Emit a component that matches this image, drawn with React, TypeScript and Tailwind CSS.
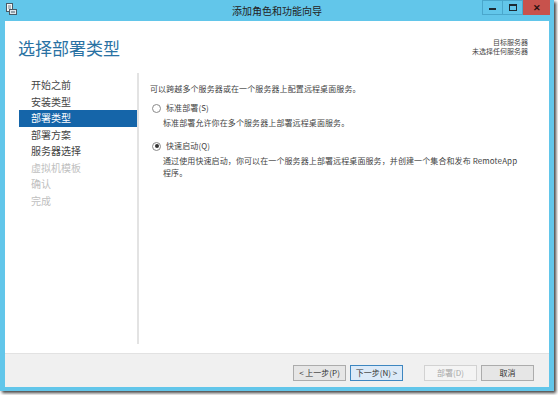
import React from "react";

const navItems: { label: string; state: "normal" | "active" | "disabled" }[] = [
  { label: "开始之前", state: "normal" },
  { label: "安装类型", state: "normal" },
  { label: "部署类型", state: "active" },
  { label: "部署方案", state: "normal" },
  { label: "服务器选择", state: "normal" },
  { label: "虚拟机模板", state: "disabled" },
  { label: "确认", state: "disabled" },
  { label: "完成", state: "disabled" },
];

function Radio({ checked }: { checked?: boolean }) {
  return (
    <span className="flex h-[9px] w-[9px] items-center justify-center rounded-full border border-[#8a8a8a] bg-white">
      {checked && <span className="h-[4px] w-[4px] rounded-full bg-[#333]" />}
    </span>
  );
}

function TitleIcon() {
  return (
    <svg width="11" height="12" viewBox="0 0 11 12">
      <rect x="0.5" y="0.5" width="6" height="8" fill="#f4f4f4" stroke="#4a5a66" />
      <line x1="2" y1="3" x2="5" y2="3" stroke="#7a8a96" />
      <line x1="2" y1="5" x2="5" y2="5" stroke="#7a8a96" />
      <rect x="3.5" y="6.5" width="7" height="5" fill="#dfe8ee" stroke="#4a5a66" />
      <line x1="5" y1="9" x2="9" y2="9" stroke="#4a5a66" />
    </svg>
  );
}

export default function App() {
  return (
    <div className="h-[395px] w-[558px] bg-white font-['Noto_Sans_CJK_SC','Microsoft_YaHei',sans-serif] text-[#3a3a3a]">
      <div className="flex h-[391px] w-[554px] flex-col bg-[#62c6ea] shadow-[2px_2px_3px_rgba(0,0,0,0.75)]">
        {/* title bar */}
        <div className="relative flex h-[21px] items-start">
          <div className="pl-[6px] pt-[3px]">
            <TitleIcon />
          </div>
          <div className="absolute left-0 right-0 top-[3px] text-center text-[10px] leading-[15px] text-[#222]">
            添加角色和功能向导
          </div>
          <div className="relative ml-auto mr-[4px] flex h-[15px]">
            <div className="flex h-[15px] w-[21px] items-center justify-center border border-[#4aa7cc]">
              <span className="mt-[3px] h-[2px] w-[7px] bg-[#1d2a33]" />
            </div>
            <div className="flex h-[15px] w-[20px] items-center justify-center border-y border-r border-[#4aa7cc]">
              <span className="h-[7px] w-[8px] border border-t-2 border-[#1d2a33]" />
            </div>
            <div className="flex h-[15px] w-[27px] items-center justify-center bg-[#c8524c] text-[9px] font-bold leading-none text-[#2a1010]">
              ✕
            </div>
          </div>
        </div>

        {/* body */}
        <div className="mx-[5px] mb-[4px] flex flex-1 flex-col bg-white">
          {/* header */}
          <div className="flex h-[52px] items-start justify-between">
            <div className="pl-[13px] pt-[15px] text-[17px] leading-[24px] text-[#2a72a3]">选择部署类型</div>
            <div className="pr-[21px] pt-[17px] text-right text-[7px] leading-[9px] text-[#444]">
              <div>目标服务器</div>
              <div>未选择任何服务器</div>
            </div>
          </div>

          {/* main */}
          <div className="flex flex-1">
            <div className="mb-[9px] w-[134px] border-r-2 border-[#e3e3e3]">
              <div className="ml-[14px] mt-[4px] flex flex-col">
                {navItems.map((it) => (
                  <div
                    key={it.label}
                    className={
                      it.state === "active"
                        ? "h-[16.5px] bg-[#1565a9] pl-[12px] text-[10px] leading-[16.5px] text-white"
                        : it.state === "disabled"
                        ? "h-[16.5px] pl-[12px] text-[10px] leading-[16.5px] text-[#c0c0c0]"
                        : "h-[16.5px] pl-[12px] text-[10px] leading-[16.5px] text-[#444]"
                    }
                  >
                    {it.label}
                  </div>
                ))}
              </div>
            </div>
            <div className="flex-1 pl-[11px] pt-[10px] text-[8px] leading-[12px] tracking-[0.1px] text-[#444]">
              <div>可以跨越多个服务器或在一个服务器上配置远程桌面服务。</div>
              <div className="ml-[2px] mt-[6px] flex h-[14px] items-center gap-[5px]">
                <Radio />
                <span>标准部署(S)</span>
              </div>
              <div className="mt-[2px] pl-[13px]">标准部署允许你在多个服务器上部署远程桌面服务。</div>
              <div className="ml-[2px] mt-[10px] flex h-[14px] items-center gap-[5px]">
                <Radio checked />
                <span>快速启动(Q)</span>
              </div>
              <div className="mt-[2px] pl-[13px]">
                通过使用快速启动，你可以在一个服务器上部署远程桌面服务，并创建一个集合和发布 RemoteApp
                <br />
                程序。
              </div>
            </div>
          </div>

          {/* footer */}
          <div className="flex h-[34px] items-start justify-end border-t border-[#e2e2e2] bg-[#f0f0f0] pr-[15px] pt-[11px] text-[8px]">
            <button className="h-[16px] w-[53px] border border-[#acacac] bg-[#e6e6e6] leading-[14px] text-[#333]">
              &lt; 上一步(P)
            </button>
            <button className="ml-[4px] h-[16px] w-[53px] border border-[#3d86c0] bg-[#dceaf8] leading-[14px] text-[#333]">
              下一步(N) &gt;
            </button>
            <button className="ml-[21px] h-[16px] w-[53px] border border-[#d2d2d2] bg-[#f4f4f4] leading-[14px] text-[#a8a8a8]">
              部署(D)
            </button>
            <button className="ml-[4px] h-[16px] w-[53px] border border-[#acacac] bg-[#e6e6e6] leading-[14px] text-[#333]">
              取消
            </button>
          </div>
        </div>
      </div>
    </div>
  );
}
